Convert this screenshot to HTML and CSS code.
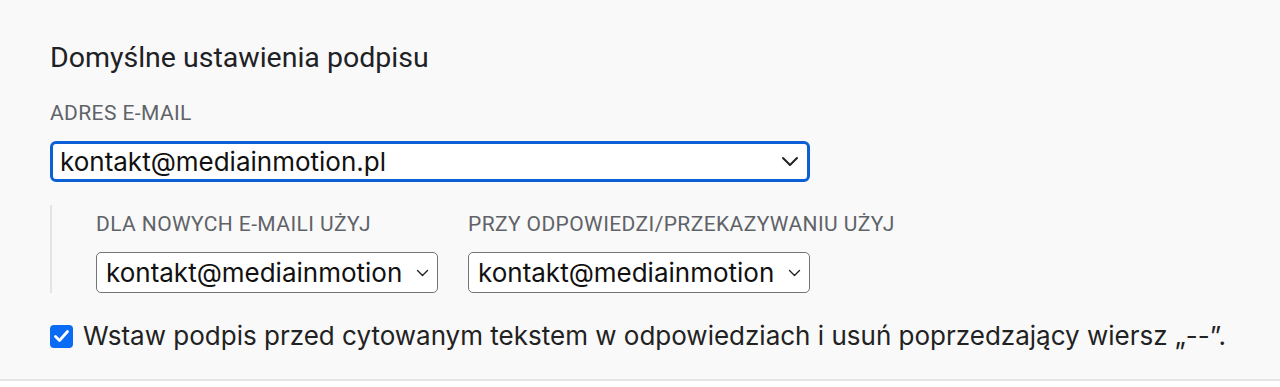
FILE: index.html
```html
<!DOCTYPE html>
<html>
<head>
<link rel="stylesheet" href="styles.css">
</head>
<body>

<div class="signature-settings">
  <h2 class="settings-title">Domyślne ustawienia podpisu</h2>

  <div class="field-label">ADRES E-MAIL</div>
  <div class="select select-main">
    <span class="select-value">kontakt@mediainmotion.pl</span>
    <svg class="select-arrow" width="18" height="11" viewBox="0 0 18 11">
      <path d="M2 2 L9 9 L16 2" fill="none" stroke="#222" stroke-width="2" stroke-linecap="round" stroke-linejoin="round"/>
    </svg>
  </div>

  <div class="sub-fields">
    <div class="sub-field">
      <div class="field-label">DLA NOWYCH E-MAILI UŻYJ</div>
      <div class="select select-small">
        <span class="select-value">kontakt@mediainmotion</span>
        <svg class="select-arrow" width="13" height="8" viewBox="0 0 13 8">
          <path d="M1.5 1.5 L6.5 6.5 L11.5 1.5" fill="none" stroke="#222" stroke-width="1.4" stroke-linecap="round" stroke-linejoin="round"/>
        </svg>
      </div>
    </div>
    <div class="sub-field">
      <div class="field-label">PRZY ODPOWIEDZI/PRZEKAZYWANIU UŻYJ</div>
      <div class="select select-small">
        <span class="select-value">kontakt@mediainmotion</span>
        <svg class="select-arrow" width="13" height="8" viewBox="0 0 13 8">
          <path d="M1.5 1.5 L6.5 6.5 L11.5 1.5" fill="none" stroke="#222" stroke-width="1.4" stroke-linecap="round" stroke-linejoin="round"/>
        </svg>
      </div>
    </div>
  </div>

  <label class="check-row">
    <span class="checkbox">
      <svg width="17" height="14" viewBox="0 0 17 14">
        <path d="M2.5 7.5 L6.5 11.5 L14.5 2.5" fill="none" stroke="#fff" stroke-width="2.8" stroke-linecap="round" stroke-linejoin="round"/>
      </svg>
    </span>
    <span class="check-text">Wstaw podpis przed cytowanym tekstem w odpowiedziach i usuń poprzedzający wiersz „--”.</span>
  </label>
</div>

</body>
</html>
```

FILE: styles.css
```css
body {
  margin: 0;
  background-color: #fff;
  font-family: Inter, "Noto Sans", sans-serif;
}

.signature-settings {
  background-color: #f9f9f9;
  padding: 41px 0 28px 50px;
  border-bottom: 2px solid #e6e6e6;
}

.settings-title {
  margin: 0 0 26px 0;
  font-family: Roboto, "Noto Sans", sans-serif;
  font-size: 28.5px;
  font-weight: 400;
  line-height: 34px;
  color: #202124;
}

.field-label {
  font-family: Roboto, "Noto Sans", sans-serif;
  font-size: 21px;
  line-height: 24px;
  color: #5f6368;
  letter-spacing: 0.4px;
}

.select {
  display: flex;
  align-items: center;
  justify-content: space-between;
  box-sizing: border-box;
  background-color: #fff;
  color: #111;
}

.select-main {
  width: 760px;
  height: 41px;
  margin-top: 16px;
  padding: 0 8px 0 7px;
  border: 3px solid #0b60d6;
  border-radius: 6px;
  font-size: 26px;
}

.select-small {
  width: 342px;
  height: 41px;
  margin-top: 16px;
  padding: 0 8px 0 9px;
  border: 1.5px solid #747474;
  border-radius: 5px;
  font-size: 26px;
}

.select-value {
  white-space: nowrap;
  overflow: hidden;
}

.select-arrow {
  flex: none;
}

.sub-fields {
  display: flex;
  gap: 30px;
  margin-top: 23px;
  padding: 7px 0 0 44px;
  border-left: 2px solid #e2e4e8;
}

.check-row {
  display: flex;
  align-items: center;
  gap: 10px;
  margin-top: 28px;
}

.checkbox {
  display: flex;
  align-items: center;
  justify-content: center;
  width: 23px;
  height: 23px;
  border-radius: 4px;
  background-color: #0a6cf5;
}

.check-text {
  font-size: 26px;
  line-height: 30px;
  color: #222;
}
```
